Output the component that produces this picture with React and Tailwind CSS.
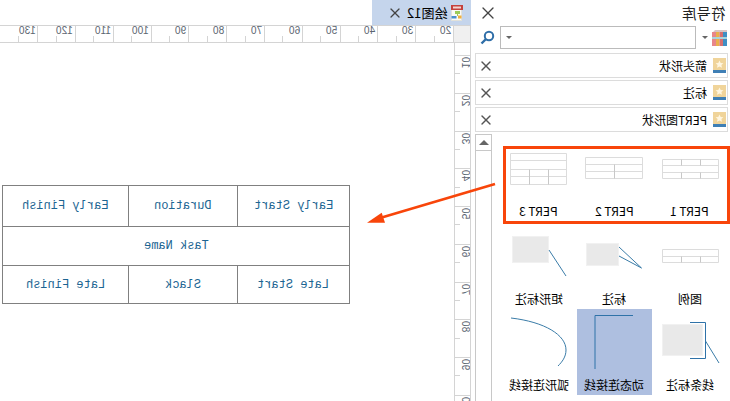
import { X } from 'lucide-react';

const CJK = "font-['Noto_Sans_CJK_SC','Liberation_Sans',sans-serif]";
const LINE = '#dcdcdc';
const DARK = '#c8c8c8';
const BLUE = '#3a7ca8';

// the whole shot is flipped horizontally, so every text gets flipped back
const Flip = ({ className = '', children }) => (
  <span className={`inline-block -scale-x-100 whitespace-nowrap ${className}`}>{children}</span>
);

const hRuler = [130, 120, 110, 100, 90, 80, 70, 60, 50, 40, 30, 20];
const vRuler = [10, 20, 30, 40, 50, 60, 70, 80, 90, 100];

const HTick = ({ label }) => (
  <div className="w-[37.8px] h-full shrink-0 flex flex-col border-r border-[#d4d4d4]">
    <div className="h-[10px] pr-[2px] flex justify-end items-center leading-none">
      <Flip className="text-[10px] text-[#5a6470] font-['Liberation_Sans',sans-serif]">{label}</Flip>
    </div>
    <div className="flex-1 w-1/2 border-r border-[#d4d4d4]" />
  </div>
);

const VTick = ({ label }) => (
  <div className="h-[37.75px] shrink-0 w-full flex border-t border-[#d4d4d4]">
    <div className="w-[7px] h-1/2 border-b border-[#d4d4d4]" />
    <div className="flex-1 pt-[1px] flex justify-center items-start leading-none">
      <span className="inline-block [writing-mode:vertical-rl] -scale-y-100 text-[10px] leading-none text-[#5a6470] font-['Liberation_Sans',sans-serif]">
        {label}
      </span>
    </div>
  </div>
);

const Cell = ({ text, className = '' }) => (
  <div className={`flex items-center justify-center ${className}`}>
    <Flip className="text-[12px] text-[#1c6592] font-['Liberation_Mono',monospace]">{text}</Flip>
  </div>
);

const PertTable = () => (
  <div className="w-[348px] h-[119px] border border-[#808080] flex flex-col">
    <div className="h-[41px] flex border-b border-[#808080]">
      <Cell text="Early Finish" className="w-[126px] border-r border-[#808080]" />
      <Cell text="Duration" className="w-[109px] border-r border-[#808080]" />
      <Cell text="Early Start" className="flex-1" />
    </div>
    <div className="h-[39px] flex border-b border-[#808080]">
      <Cell text="Task Name" className="flex-1" />
    </div>
    <div className="flex-1 flex">
      <Cell text="Late Finish" className="w-[126px] border-r border-[#808080]" />
      <Cell text="Slack" className="w-[109px] border-r border-[#808080]" />
      <Cell text="Late Start" className="flex-1" />
    </div>
  </div>
);

const StarTile = () => (
  <svg width="13" height="15" viewBox="0 0 13 15" className="shrink-0">
    <rect width="13" height="12" fill="#f0d49a" />
    <rect y="12" width="13" height="3" fill="#3f7fb5" />
    <path d="M6.5 2.5l1.2 2.5 2.7.3-2 1.8.6 2.7-2.5-1.4-2.5 1.4.6-2.7-2-1.8 2.7-.3z" fill="#fff6e0" />
  </svg>
);

const Accordion = ({ title }) => (
  <div className="h-[25px] mr-[2px] border border-[#dcdcdc] flex items-center justify-between pl-[2px] pr-[1px]">
    <X size={16} strokeWidth={2} className="text-[#555]" />
    <div className="flex items-center gap-[6px]">
      <Flip className={`text-[12px] leading-none text-black ${CJK}`}>{title}</Flip>
      <StarTile />
    </div>
  </div>
);

const TableThumb = ({ x1, x2, rows, cols }) => (
  <g fill="none">
    {rows.map((y, i) => (
      <line key={i} x1={x1} x2={x2} y1={y} y2={y} stroke={LINE} />
    ))}
    <line x1={x1} x2={x1} y1={rows[0]} y2={rows[rows.length - 1]} stroke={LINE} />
    <line x1={x2} x2={x2} y1={rows[0]} y2={rows[rows.length - 1]} stroke={LINE} />
    {cols.map(([x, y1, y2], i) => (
      <line key={i} x1={x} x2={x} y1={y1} y2={y2} stroke={DARK} />
    ))}
  </g>
);

const GreyBox = ({ x, y, w, h }) => (
  <rect x={x} y={y} width={w} height={h} fill="#e9e9e9" stroke="#f1f1f1" />
);

const shapes = [
  {
    label: 'PERT 3',
    tight: true,
    art: (
      <TableThumb
        x1={9.5}
        x2={65.5}
        rows={[16.5, 23.5, 32.5, 39.5, 47.5]}
        cols={[[28.5, 32.5, 47.5], [47.5, 32.5, 47.5]]}
      />
    ),
  },
  {
    label: 'PERT 2',
    tight: true,
    art: <TableThumb x1={9.5} x2={66.5} rows={[20.5, 27.5, 34.5, 41.5]} cols={[[38.5, 27.5, 41.5]]} />,
  },
  {
    label: 'PERT 1',
    tight: true,
    art: (
      <TableThumb
        x1={10.5}
        x2={66.5}
        rows={[22.5, 28.5, 35.5, 41.5]}
        cols={[[29.5, 22.5, 28.5], [48.5, 22.5, 28.5], [29.5, 35.5, 41.5], [48.5, 35.5, 41.5]]}
      />
    ),
  },
  {
    label: '矩形标注',
    art: (
      <>
        <GreyBox x={11.5} y={13.5} w={36} h={26} />
        <line x1={48} y1={27} x2={65} y2={53} stroke={BLUE} />
      </>
    ),
  },
  {
    label: '标注',
    art: (
      <>
        <GreyBox x={10.5} y={20.5} w={32} h={22} />
        <path d="M43 24L65.5 45M43 33L65.5 45" fill="none" stroke={BLUE} />
      </>
    ),
  },
  {
    label: '图例',
    art: (
      <TableThumb
        x1={10.5}
        x2={66.5}
        rows={[26.5, 33.5, 39.5]}
        cols={[[29.5, 33.5, 39.5], [48.5, 33.5, 39.5]]}
      />
    ),
  },
  {
    label: '弧形连接线',
    art: <path d="M10 9C44 13 65 26 65 41C65 48 61 53 57 57" fill="none" stroke={BLUE} />,
  },
  {
    label: '动态连接线',
    selected: true,
    art: <path d="M19 60V6.5H57" fill="none" stroke="#2f72a8" />,
  },
  {
    label: '线条标注',
    art: (
      <>
        <GreyBox x={10.5} y={15.5} w={40} h={31} />
        <path d="M38 13.5H53.5V49.5H38" fill="none" stroke="#2f72a8" />
        <line x1={53.5} y1={32} x2={67} y2={54} stroke={BLUE} />
      </>
    ),
  },
];

const ShapeCell = ({ label, art, selected, tight }) => (
  <div className={`h-[86px] flex flex-col items-center ${selected ? 'bg-[#aebfe0]' : ''}`}>
    <svg width="76" height="64" viewBox="0 0 76 64" className="shrink-0 overflow-visible">
      {art}
    </svg>
    <div className={`h-4 leading-4 ${tight ? 'mt-[1px]' : 'mt-[3px]'}`}>
      <Flip className={`text-[12px] leading-4 text-black ${CJK}`}>{label}</Flip>
    </div>
  </div>
);

export default function App() {
  return (
    <div className="relative w-[730px] h-[401px] overflow-hidden bg-white flex">
      {/* canvas side */}
      <div className="w-[471px] shrink-0 flex flex-col">
        <div className="h-[25px] shrink-0 flex justify-end">
          <div className="w-[99px] bg-[#c5d5ec] flex items-center pl-[15px]">
            <X size={16} strokeWidth={1.8} className="text-[#444]" />
            <Flip className={`ml-[4px] text-[13px] leading-none text-black ${CJK}`}>绘图12</Flip>
            <svg width="14" height="16" viewBox="0 0 14 16" className="ml-[3px]">
              <rect x="1.5" y="3.5" width="10" height="12" fill="#fbfbf6" stroke="#e2e2da" />
              <rect x="1" y="0" width="12" height="5" fill="#c4413c" />
              <rect x="3" y="1.5" width="8" height="2" fill="#f3d5d2" />
              <rect x="5" y="6" width="5" height="3" fill="#9ccc5a" />
              <rect x="1.5" y="11" width="5" height="2.5" fill="#4a90d0" />
              <rect x="8" y="10.5" width="3.5" height="3" fill="#f0b040" />
              <path d="M7.5 9v2" stroke="#9ccc5a" />
            </svg>
          </div>
        </div>
        <div className="h-[18px] shrink-0 flex border-y border-[#d4d4d4]">
          <div className="w-[454px] flex justify-end overflow-hidden">
            {hRuler.map((n) => (
              <HTick key={n} label={n} />
            ))}
          </div>
          <div className="w-[16px] bg-[#f0f0f0]" />
          <div className="w-px bg-[#d4d4d4]" />
        </div>
        <div className="flex-1 min-h-0 flex">
          <div className="w-[454px] pl-[2px] pt-[142px]">
            <PertTable />
          </div>
          <div className="w-[17px] border-x border-[#d4d4d4] overflow-hidden flex flex-col pt-[12px]">
            {vRuler.map((n) => (
              <VTick key={n} label={n} />
            ))}
          </div>
        </div>
      </div>

      {/* symbol library */}
      <div className="flex-1 min-w-0 pl-[4px] flex flex-col">
        <div className="h-[26px] shrink-0 flex items-center justify-between pl-[3px] pr-[5px]">
          <X size={20} strokeWidth={1.6} className="text-[#444]" />
          <Flip className={`text-[14.5px] leading-none text-[#222] ${CJK}`}>符号库</Flip>
        </div>
        <div className="h-[23px] shrink-0 flex items-center pl-[5px]">
          <svg width="15" height="15" viewBox="0 0 15 15">
            <circle cx="9" cy="6" r="4.2" fill="none" stroke="#2f6ea8" strokeWidth="2" />
            <path d="M6 9L1.5 13.5" stroke="#2f6ea8" strokeWidth="2.4" />
          </svg>
          <div className="ml-[5px] w-[196px] h-[23px] border border-[#bbb] flex items-center pl-[5px]">
            <div className="w-0 h-0 border-x-[3px] border-x-transparent border-t-[3px] border-t-[#666]" />
          </div>
          <div className="ml-[6px] w-0 h-0 border-x-[3px] border-x-transparent border-t-[3px] border-t-[#666]" />
          <svg width="15" height="16" viewBox="0 0 15 16" className="ml-[4px]">
            <path d="M0 3L3 0H15V2H0Z" fill="#d9c4c4" />
            <rect x="0" y="2" width="4" height="14" fill="#e8868a" />
            <rect x="4" y="2" width="3.5" height="14" fill="#e9b04c" />
            <rect x="7.5" y="2" width="3.5" height="14" fill="#d76f6f" />
            <rect x="11" y="2" width="4" height="14" fill="#3f8fc4" />
            <rect x="0" y="7" width="15" height="2" fill="#a9d3dc" />
          </svg>
        </div>
        <div className="mt-[4px] flex flex-col gap-[2px]">
          <Accordion title="箭头形状" />
          <Accordion title="标注" />
          <Accordion title="PERT图形状" />
        </div>
        <div className="mt-[2px] flex-1 min-h-0 flex">
          <div className="w-[17px] shrink-0 border-x border-[#c8c8c8]">
            <div className="h-[17px] border-y border-[#c8c8c8] flex items-center justify-center">
              <div className="w-0 h-0 border-x-[5px] border-x-transparent border-b-[5px] border-b-[#666]" />
            </div>
          </div>
          <div className="flex-1 pl-[9px] pt-[3px]">
            <div className="grid grid-cols-[75.5px_75.5px_75.5px]">
              {shapes.map((s) => (
                <ShapeCell key={s.label} {...s} />
              ))}
            </div>
          </div>
        </div>
      </div>

      {/* annotation on top of the screenshot */}
      <div className="absolute left-[503px] top-[146px] w-[227px] h-[78px] border-[3px] border-[#f8450a]" />
      <svg className="absolute left-0 top-0 pointer-events-none" width="730" height="401" viewBox="0 0 730 401">
        <line x1="495" y1="184" x2="380" y2="218" stroke="#f8450a" strokeWidth="2.6" />
        <path d="M367 222.7L381.7 212.7L385 222.7Z" fill="#f8450a" />
      </svg>
    </div>
  );
}
